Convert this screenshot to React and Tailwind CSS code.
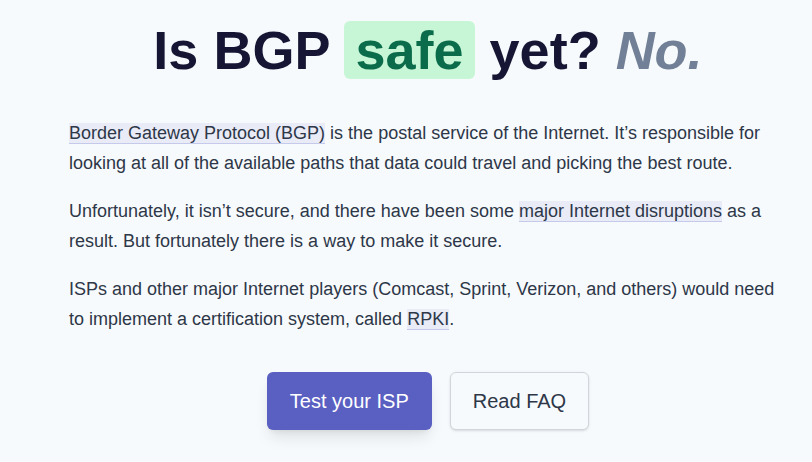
import React from 'react';

const Link = ({ children }) => (
  <a href="#" className="bg-[#e9ebf7] border-b border-[#c5c9ea] text-[#2d3748] no-underline">
    {children}
  </a>
);

const App = () => {
  return (
    <div className="min-h-[462px] bg-[#f7fafc] font-['Liberation_Sans',Arial,sans-serif] text-[#2d3748] overflow-hidden">
      <div className="pl-[69px] pr-[25px] pt-[14px]">
        <h1 className="text-center text-[54px] leading-[72px] font-bold text-[#161634] whitespace-nowrap">
          Is BGP{' '}
          <span className="inline-block leading-[58px] bg-[#c6f6d5] text-[#0b6c4b] rounded-md px-[11px]">safe</span>{' '}
          yet? <span className="italic text-[#718096]">No.</span>
        </h1>

        <div className="mt-[32px] text-[18px] leading-[30px]">
          <p>
            <Link>Border Gateway Protocol (BGP)</Link> is the postal service of the Internet. It’s responsible for
            looking at all of the available paths that data could travel and picking the best route.
          </p>
          <p className="mt-[18px]">
            Unfortunately, it isn’t secure, and there have been some <Link>major Internet disruptions</Link> as a
            result. But fortunately there is a way to make it secure.
          </p>
          <p className="mt-[18px]">
            ISPs and other major Internet players (Comcast, Sprint, Verizon, and others) would need
            to implement a certification system, called <Link>RPKI</Link>.
          </p>
        </div>

        <div className="mt-[38px] flex justify-center gap-[18px]">
          <button className="h-[58px] px-[23px] rounded-md bg-[#5a5fc2] text-white text-[20px] shadow-lg">
            Test your ISP
          </button>
          <button className="h-[58px] px-[22px] rounded-md bg-[#f7fafc] border border-[#d2d6dc] text-[#2d3748] text-[20px] shadow-sm">
            Read FAQ
          </button>
        </div>
      </div>
    </div>
  );
};

export default App;
